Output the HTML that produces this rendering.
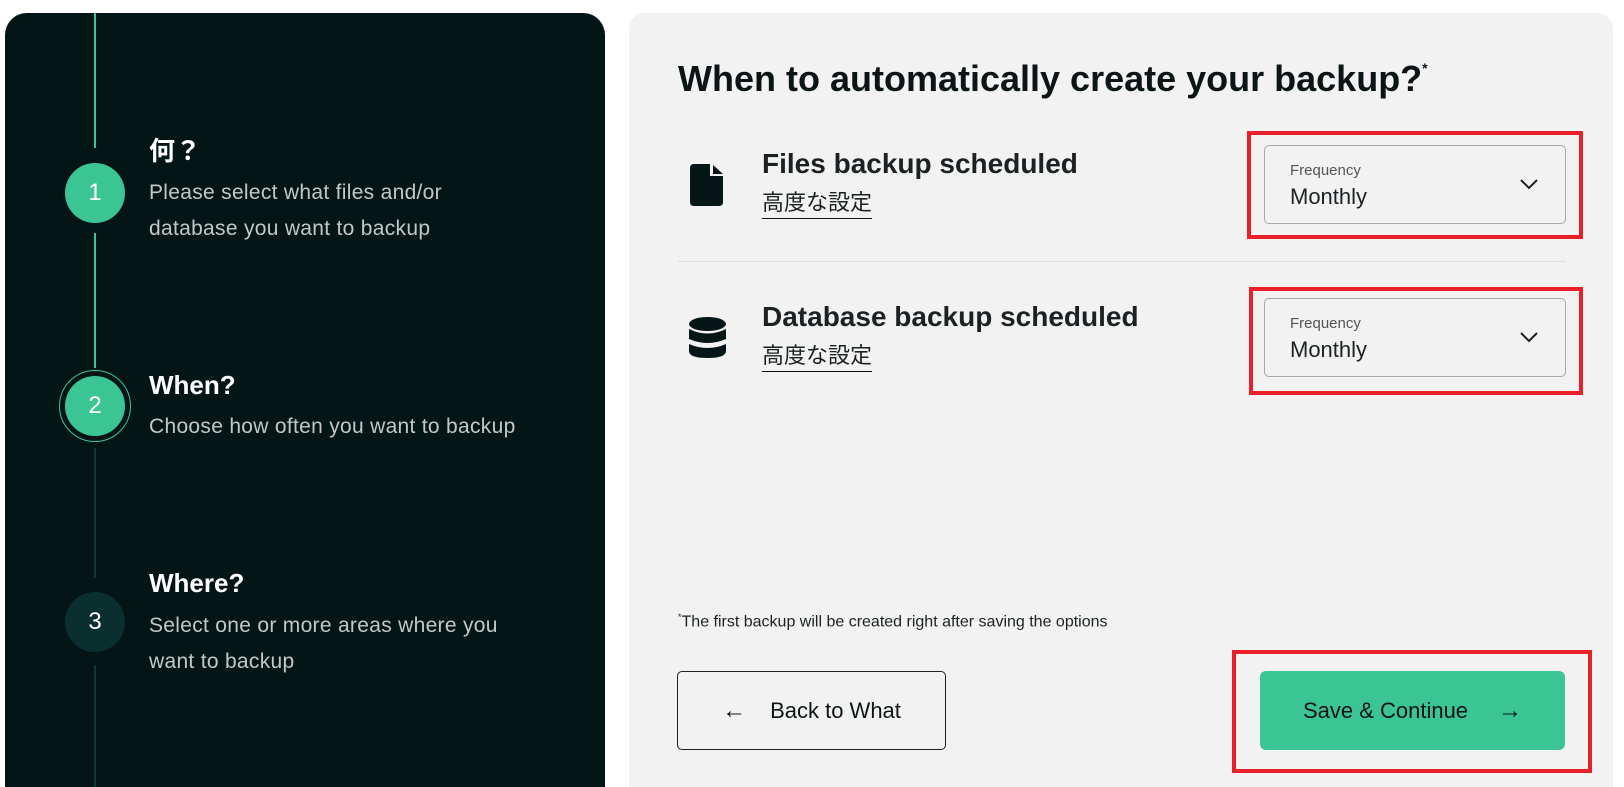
<!DOCTYPE html>
<html style="width:1624px;height:787px;overflow:hidden"><head><meta charset="utf-8"><style>
*{margin:0;padding:0;box-sizing:border-box}
body{width:1624px;height:787px;background:#fff;position:relative;overflow:hidden;font-family:"Liberation Sans","Noto Sans CJK JP",sans-serif}
.abs{position:absolute}
.left{left:5px;top:13px;width:600px;height:774px;background:#041516;border-radius:22px 22px 0 0}
.right{left:629px;top:13px;width:984px;height:774px;background:#f2f2f2;border-radius:16px 16px 0 0}
.circ{position:absolute;width:60px;height:60px;border-radius:50%;display:flex;align-items:center;justify-content:center;color:#fff;font-size:24px}
.t{position:absolute;left:149px;color:#fff;font-weight:bold;font-size:26px;line-height:30px}
.d{position:absolute;left:149px;color:#c3c7c7;font-size:21px;line-height:36px;letter-spacing:0.3px}
.h{left:678px;top:58px;font-size:36px;font-weight:bold;color:#0c1416;white-space:nowrap}
.rt{position:absolute;left:762px;font-size:28px;font-weight:bold;color:#1c2224;white-space:nowrap}
.lk{position:absolute;left:762px;font-size:22px;color:#1c2224;border-bottom:1.5px solid #0c1416;padding-bottom:2px;line-height:26px}
.red{position:absolute;border:4px solid #e8202a}
.sel{position:absolute;left:1264px;width:302px;height:79px;border:1px solid #a8a8a8;border-radius:5px}
.sel .f{position:absolute;left:25px;top:16px;font-size:15px;color:#555}
.sel .m{position:absolute;left:25px;top:38px;font-size:22px;color:#1c2224}
.sel svg{position:absolute;right:26px;top:32px}
</style></head><body>
<div class="abs left"></div>
<div class="abs" style="left:94px;top:13px;width:2px;height:135px;background:#3cc594"></div>
<div class="abs" style="left:94px;top:233px;width:2px;height:135px;background:#3cc594"></div>
<div class="abs" style="left:94px;top:448px;width:2px;height:130px;background:#0f3535"></div>
<div class="abs" style="left:94px;top:665px;width:2px;height:122px;background:#0f3535"></div>
<div class="circ" style="left:65px;top:163px;background:#3cc594">1</div>
<div class="abs" style="left:59px;top:370px;width:72px;height:72px;border-radius:50%;border:1.5px solid #3cc594"></div>
<div class="circ" style="left:65px;top:376px;background:#3cc594">2</div>
<div class="circ" style="left:65px;top:592px;background:#0b2e2f">3</div>
<div class="t" style="top:136px">何？</div>
<div class="d" style="top:175px">Please select what files and/or<br>database you want to backup</div>
<div class="t" style="top:370px">When?</div>
<div class="d" style="top:409px">Choose how often you want to backup</div>
<div class="t" style="top:568px">Where?</div>
<div class="d" style="top:608px">Select one or more areas where you<br>want to backup</div>

<div class="abs right"></div>
<div class="abs h">When to automatically create your backup?<sup style="font-size:14px;vertical-align:18px">*</sup></div>
<svg class="abs" style="left:690px;top:164px" width="34" height="42" viewBox="0 0 34 42"><path d="M4 0H20V12H33V38Q33 42 29 42H4Q0 42 0 38V4Q0 0 4 0Z" fill="#061616"/><path d="M23 1L33 10H23Z" fill="#061616"/></svg>
<div class="rt" style="top:148px">Files backup scheduled</div>
<div class="lk" style="top:190px">高度な設定</div>
<div class="abs" style="left:678px;top:261px;width:888px;height:1px;background:#dedede"></div>
<svg class="abs" style="left:689px;top:317px" width="37" height="41" viewBox="0 0 37 41"><ellipse cx="18.5" cy="7" rx="18.5" ry="7" fill="#061616"/><path d="M0 12Q18.5 21 37 12V22Q18.5 30 0 22Z" fill="#061616"/><path d="M0 27Q18.5 35 37 27V34Q37 41 18.5 41Q0 41 0 34Z" fill="#061616"/></svg>
<div class="rt" style="top:301px">Database backup scheduled</div>
<div class="lk" style="top:343px">高度な設定</div>

<div class="red" style="left:1247px;top:131px;width:336px;height:108px"></div>
<div class="sel" style="top:145px"><div class="f">Frequency</div><div class="m">Monthly</div><svg width="20" height="12" viewBox="0 0 20 12"><path d="M2 2L10 10L18 2" fill="none" stroke="#1c2224" stroke-width="2"/></svg></div>
<div class="red" style="left:1249px;top:287px;width:334px;height:108px"></div>
<div class="sel" style="top:298px"><div class="f">Frequency</div><div class="m">Monthly</div><svg width="20" height="12" viewBox="0 0 20 12"><path d="M2 2L10 10L18 2" fill="none" stroke="#1c2224" stroke-width="2"/></svg></div>

<div class="abs" style="left:678px;top:612px;font-size:16px;color:#1c2224"><sup style="font-size:9px">*</sup>The first backup will be created right after saving the options</div>

<div class="abs" style="left:677px;top:671px;width:269px;height:79px;border:1px solid #1c2224;border-radius:5px;display:flex;align-items:center;justify-content:center;font-size:22px;color:#0c1416"><span style="margin-right:24px;font-size:24px">←</span>Back to What</div>
<div class="red" style="left:1232px;top:650px;width:360px;height:123px"></div>
<div class="abs" style="left:1260px;top:671px;width:305px;height:79px;background:#3cc594;border-radius:6px;display:flex;align-items:center;justify-content:center;font-size:22px;color:#0c1416">Save &amp; Continue<span style="margin-left:30px;font-size:24px">→</span></div>
</body></html>
